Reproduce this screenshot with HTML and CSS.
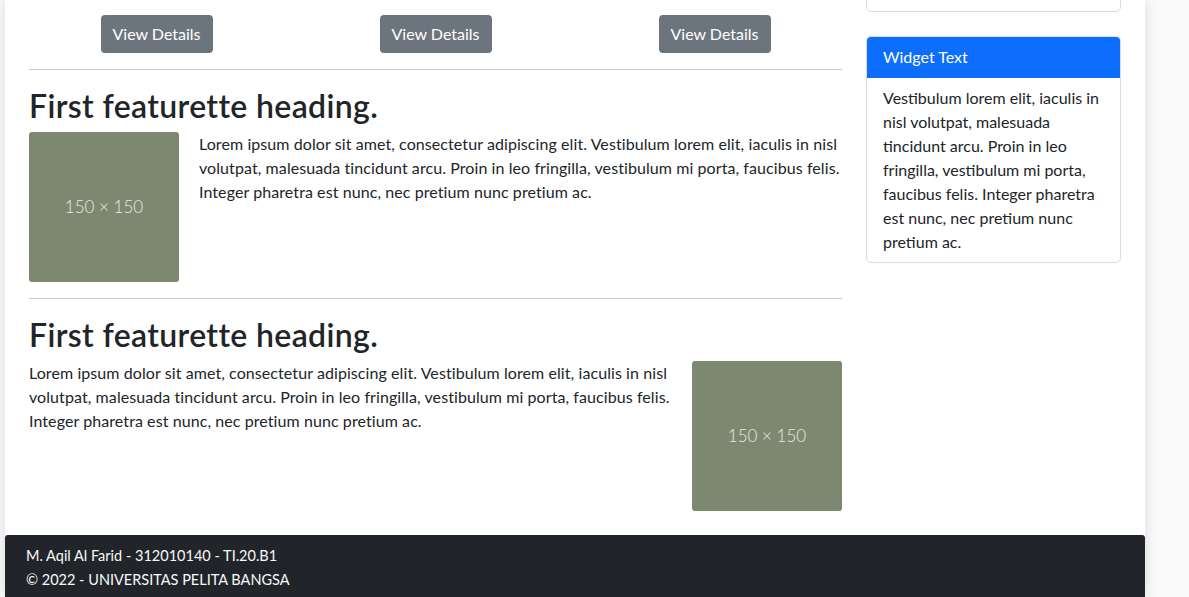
FILE: index.html
```html
<!DOCTYPE html>
<html lang="en">
<head>
<meta charset="utf-8">
<title>Featurettes</title>
<link rel="stylesheet" href="styles.css">
</head>
<body>
<div class="page">
  <div class="layout">
    <main class="main">
      <div class="btn-row">
        <div class="btn-col"><a class="btn" href="#">View Details</a></div>
        <div class="btn-col"><a class="btn" href="#">View Details</a></div>
        <div class="btn-col"><a class="btn" href="#">View Details</a></div>
      </div>
      <hr class="divider">
      <section class="feature">
        <h2 class="feature-title">First featurette heading.</h2>
        <div class="feature-body">
          <div class="thumb"><span>150 × 150</span></div>
          <p class="feature-text">Lorem ipsum dolor sit amet, consectetur adipiscing elit. Vestibulum lorem elit, iaculis in nisl volutpat, malesuada tincidunt arcu. Proin in leo fringilla, vestibulum mi porta, faucibus felis. Integer pharetra est nunc, nec pretium nunc pretium ac.</p>
        </div>
      </section>
      <hr class="divider">
      <section class="feature">
        <h2 class="feature-title">First featurette heading.</h2>
        <div class="feature-body">
          <p class="feature-text">Lorem ipsum dolor sit amet, consectetur adipiscing elit. Vestibulum lorem elit, iaculis in nisl volutpat, malesuada tincidunt arcu. Proin in leo fringilla, vestibulum mi porta, faucibus felis. Integer pharetra est nunc, nec pretium nunc pretium ac.</p>
          <div class="thumb"><span>150 × 150</span></div>
        </div>
      </section>
    </main>
    <aside class="sidebar">
      <div class="card card-top">
        <div class="card-body">Widget</div>
      </div>
      <div class="card">
        <div class="card-header">Widget Text</div>
        <div class="card-body">Vestibulum lorem elit, iaculis in nisl volutpat, malesuada tincidunt arcu. Proin in leo fringilla, vestibulum mi porta, faucibus felis. Integer pharetra est nunc, nec pretium nunc pretium ac.</div>
      </div>
    </aside>
  </div>
  <footer class="footer">
    <div>M. Aqil Al Farid - 312010140 - TI.20.B1</div>
    <div>© 2022 - UNIVERSITAS PELITA BANGSA</div>
  </footer>
</div>
</body>
</html>
```
FILE: styles.css
```css
html, body {
  margin: 0;
  padding: 0;
}
body {
  background: #fafafa;
  font-family: "Lato", "Open Sans", sans-serif;
  font-size: 16px;
  line-height: 24px;
  color: #212529;
}
.page {
  width: 1140px;
  margin-left: 5px;
  background: #fff;
  box-shadow: 0 0 14px rgba(0, 0, 0, 0.13);
}
.layout {
  display: flex;
  gap: 24px;
  padding: 0 24px;
}
.main {
  width: 813px;
  flex: none;
}
.sidebar {
  width: 255px;
  flex: none;
}
.btn-row {
  display: flex;
  margin: 15px -12px 0;
}
.btn-col {
  flex: 1;
  display: flex;
  justify-content: center;
}
.btn {
  display: inline-block;
  width: 112px;
  box-sizing: border-box;
  padding: 7px 0;
  text-align: center;
  background: #6c757d;
  color: #fff;
  border-radius: 4px;
  text-decoration: none;
  font-size: 16px;
  line-height: 24px;
}
.divider {
  border: 0;
  border-top: 1px solid #c9c9c9;
  margin: 16px 0;
}
.feature-title {
  margin: 0 0 8px;
  padding-top: 1px;
  font-size: 32px;
  line-height: 37px;
  font-weight: 600;
  letter-spacing: 0.35px;
  color: #212529;
}
.feature-body {
  display: flex;
  gap: 20px;
  align-items: flex-start;
}
.thumb {
  width: 150px;
  height: 150px;
  flex: none;
  background: #7d8870;
  border-radius: 3px;
  display: flex;
  align-items: center;
  justify-content: center;
  color: #e6e8e2;
  font-size: 17px;
  font-weight: 300;
}
.feature-text {
  margin: 0;
  flex: 1;
  letter-spacing: 0.08px;
}
.card {
  border: 1px solid #dcdcdc;
  border-radius: 5px;
  background: #fff;
  overflow: hidden;
  margin-bottom: 24px;
}
.card-top {
  margin-top: -30px;
}
.card-header {
  background: #0d6efd;
  color: #fff;
  padding: 8px 16px;
  border-bottom: 1px solid #0d6efd;
}
.card-body {
  padding: 8px 16px;
}
.footer {
  margin-top: 24px;
  background: #212529;
  color: #f8f9fa;
  padding: 9px 21px 5px;
  font-size: 14.5px;
  line-height: 24px;
  border-radius: 3px 3px 0 0;
}
```
